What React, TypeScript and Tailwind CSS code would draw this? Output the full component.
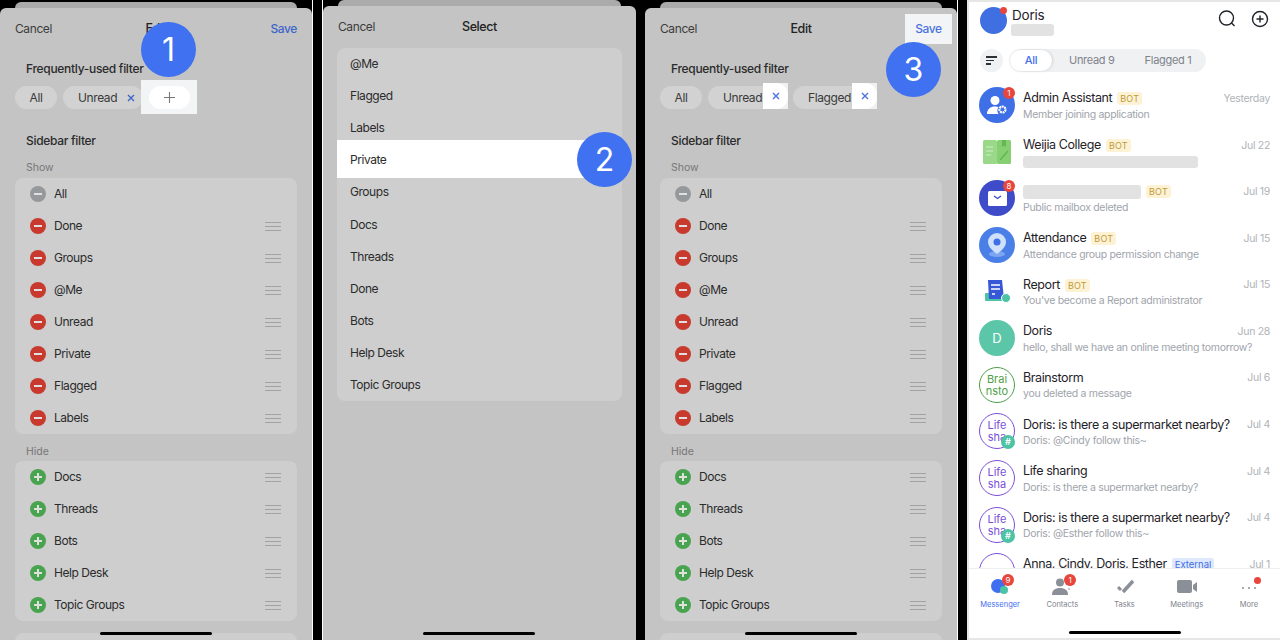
import type { ReactNode } from 'react';

const font = { fontFamily: 'Inter, "Noto Sans", sans-serif' };

const Grip = () => (
  <div className="flex w-4 flex-col gap-[3px]">
    <div className="h-px bg-[#a2a2a2]" />
    <div className="h-px bg-[#a2a2a2]" />
    <div className="h-px bg-[#a2a2a2]" />
  </div>
);

// round minus / plus marker in the sidebar filter lists
const Marker = ({ kind }: { kind: 'lock' | 'minus' | 'plus' }) => {
  const bg = kind === 'plus' ? 'bg-[#49a44f]' : kind === 'minus' ? 'bg-[#c93a2e]' : 'bg-[#96999c]';
  return (
    <div className={`relative flex h-4 w-4 shrink-0 items-center justify-center rounded-full ${bg}`}>
      <div className="h-[1.5px] w-2 bg-[#e0e0e0]" />
      {kind === 'plus' && <div className="absolute h-2 w-[1.5px] bg-[#e0e0e0]" />}
    </div>
  );
};

const FilterRow = ({ label, kind }: { label: string; kind: 'lock' | 'minus' | 'plus' }) => (
  <div className="flex h-8 items-center pl-[15px] pr-[16px]">
    <Marker kind={kind} />
    <span className="ml-[8px] flex-1 text-[12px] tracking-[-0.45px] text-[#2b2b2b]">{label}</span>
    {kind !== 'lock' && <Grip />}
  </div>
);

const NumberBadge = ({ n, className }: { n: number; className: string }) => (
  <div className={`absolute z-20 flex h-[55px] w-[55px] items-center justify-center rounded-full bg-[#3f71f0] text-[32px] text-white ${className}`}>
    {n}
  </div>
);

const Chip = ({ children, className }: { children?: ReactNode; className: string }) => (
  <div className={`flex h-[23px] items-center rounded-full bg-[#d2d2d2] text-[12px] tracking-[-0.4px] text-[#3a3a3a] ${className}`}>{children}</div>
);

const Cross = ({ color }: { color: string }) => (
  <svg width="8" height="8" viewBox="0 0 8 8" fill="none" stroke={color} strokeWidth="1.4">
    <path d="M1 1l6 6M7 1L1 7" />
  </svg>
);

const Plus = () => (
  <svg width="11" height="11" viewBox="0 0 11 11" fill="none" stroke="#77797c" strokeWidth="1.1">
    <path d="M5.5 0v11M0 5.5h11" />
  </svg>
);

const SheetTop = ({ title, save, top }: { title: string; save: boolean; top: string }) => (
  <div className={`flex items-center justify-between px-[15px] text-[12px] leading-[16px] tracking-[-0.4px] ${top}`}>
    <span className="w-[60px] text-[#3c3c3c]">Cancel</span>
    <span className="text-[12.5px] font-medium text-[#222]">{title}</span>
    <span className="w-[60px] text-right font-medium text-[#3d66c9]">{save ? 'Save' : ''}</span>
  </div>
);

const showRows = ['Done', 'Groups', '@Me', 'Unread', 'Private', 'Flagged', 'Labels'];
const hideRows = ['Docs', 'Threads', 'Bots', 'Help Desk', 'Topic Groups'];
const selectRows = ['@Me', 'Flagged', 'Labels', 'Private', 'Groups', 'Docs', 'Threads', 'Done', 'Bots', 'Help Desk', 'Topic Groups'];

const EditSheet = ({ step }: { step: 1 | 3 }) => (
  <div className="relative flex h-[640px] w-[312px] shrink-0 flex-col overflow-hidden bg-black pt-[2px]">
    <div className="mx-[15px] h-[6px] shrink-0 rounded-t-[6px] bg-[#ababab]" />
    <div className="flex-1 rounded-t-[6px] bg-[#c4c4c4]">
      <SheetTop title="Edit" save={step === 1} top="pt-[13px]" />
      <div className="mt-[24px] px-[26px] text-[12px] font-medium leading-[16px] tracking-[-0.3px] text-[#2b2b2b]">Frequently-used filter</div>
      <div className="mt-[9px] flex px-[15px]">
        <Chip className="w-[42px] justify-center">All</Chip>
        {step === 1 ? (
          <>
            <Chip className="ml-[6px] w-[80px] pl-[15px]">
              Unread
              <span className="ml-[10px]">
                <Cross color="#3d66c9" />
              </span>
            </Chip>
            {/* the + itself is drawn in the highlight on top */}
            <Chip className="ml-[5px] w-[41px]" />
          </>
        ) : (
          <>
            <Chip className="ml-[6px] w-[80px] pl-[15px]">Unread</Chip>
            <Chip className="ml-[5px] w-[84px] pl-[15px]">Flagged</Chip>
          </>
        )}
      </div>
      <div className="mt-[24px] px-[26px] text-[12px] font-medium leading-[16px] tracking-[-0.3px] text-[#2b2b2b]">Sidebar filter</div>
      <div className="mt-[12px] px-[26px] text-[10.5px] leading-[14px] text-[#777]">Show</div>
      <div className="mx-[15px] mt-[3px] rounded-[8px] bg-[#cecece]">
        <FilterRow label="All" kind="lock" />
        {showRows.map(r => (
          <FilterRow key={r} label={r} kind="minus" />
        ))}
      </div>
      <div className="mt-[11px] px-[26px] text-[10.5px] leading-[14px] text-[#777]">Hide</div>
      <div className="mx-[15px] mt-[2px] rounded-[8px] bg-[#cecece]">
        {hideRows.map(r => (
          <FilterRow key={r} label={r} kind="plus" />
        ))}
      </div>
      <div className="mx-[15px] mt-[12px] h-[20px] rounded-t-[8px] bg-[#cecece]" />
    </div>
    <div className="absolute bottom-[5px] left-[100px] h-[3px] w-[112px] rounded-full bg-black" />
    {step === 1 ? (
      <>
        <div className="absolute left-[141px] top-[80px] flex h-[34px] w-[56px] items-center justify-center bg-[#f3f4f6]">
          <div className="flex h-[23px] w-[41px] items-center justify-center rounded-full bg-white">
            <Plus />
          </div>
        </div>
        <NumberBadge n={1} className="left-[141px] top-[22px]" />
      </>
    ) : (
      <>
        <div className="absolute left-[118px] top-[83px] h-[26px] w-[25px] bg-[#eef0f2]">
          <div className="flex h-[26px] w-[25px] items-center justify-center rounded-r-[12px] bg-white">
            <Cross color="#4a73e0" />
          </div>
        </div>
        <div className="absolute left-[207px] top-[83px] h-[26px] w-[25px] bg-[#eef0f2]">
          <div className="flex h-[26px] w-[25px] items-center justify-center rounded-r-[12px] bg-white">
            <Cross color="#4a73e0" />
          </div>
        </div>
        <div className="absolute left-[260px] top-[14px] flex h-[30px] w-[47px] items-center justify-center bg-[#f3f4f6] text-[12px] font-medium tracking-[-0.4px] text-[#4a73e0]">Save</div>
        <NumberBadge n={3} className="left-[241px] top-[42px]" />
      </>
    )}
  </div>
);

const SelectSheet = () => (
  <div className="relative flex h-[640px] w-[313px] shrink-0 flex-col overflow-hidden bg-black">
    <div className="mx-[15px] h-[6px] shrink-0 rounded-t-[6px] bg-[#ababab]" />
    <div className="flex-1 rounded-t-[6px] bg-[#c4c4c4]">
      <SheetTop title="Select" save={false} top="pt-[13px]" />
      <div className="mx-[14px] mt-[13px] rounded-[8px] bg-[#cecece]">
        {selectRows.map(r => (
          <div key={r} className="relative flex h-[32.1px] items-center px-[13px] text-[12px] tracking-[-0.45px] text-[#2b2b2b]">
            {r === 'Private' && <div className="absolute inset-x-0 bottom-[-2px] top-[-4px] bg-white" />}
            <span className="relative">{r}</span>
          </div>
        ))}
      </div>
    </div>
    <div className="absolute bottom-[5px] left-[100px] h-[3px] w-[112px] rounded-full bg-black" />
    <NumberBadge n={2} className="left-[254px] top-[132px]" />
  </div>
);

const Count = ({ n, className }: { n: number; className: string }) => (
  <div className={`absolute flex h-[12px] w-[12px] items-center justify-center rounded-full bg-[#e8453c] text-[8px] leading-none text-white ${className}`}>{n}</div>
);

const Bot = () => (
  <span className="ml-[5px] rounded-[3px] bg-[#fdf3d4] px-[3px] text-[9px] leading-[13px] tracking-wide text-[#c09a3e]">BOT</span>
);

const Blob = ({ className }: { className: string }) => <div className={`rounded-[3px] bg-[#e2e2e2] ${className}`} />;

const RingAvatar = ({ a, b, tone, hash }: { a: string; b: string; tone: string; hash?: boolean }) => (
  <div className={`relative flex h-[36px] w-[36px] flex-col items-center justify-center rounded-full border text-[11px] leading-[12px] ${tone}`}>
    <span>{a}</span>
    <span>{b}</span>
    {hash && (
      <div className="absolute bottom-[-1px] right-[-1px] flex h-[14px] w-[14px] items-center justify-center rounded-full bg-[#4cc3a5] text-[9px] font-semibold text-white">#</div>
    )}
  </div>
);

const purple = 'border-[#7a4fd8] text-[#7a4fd8]';

type Chat = { avatar: ReactNode; name: ReactNode; date: string; sub: ReactNode };

const chats: Chat[] = [
  {
    avatar: (
      <div className="relative flex h-[36px] w-[36px] items-center justify-center rounded-full bg-[#3f6fe6]">
        <svg width="22" height="20" viewBox="0 0 22 20" fill="white">
          <circle cx="9" cy="5.5" r="4.5" />
          <path d="M1 19c0-5 3.5-7.5 8-7.5 1.5 0 2.5.3 3.5.7-1.5 2-1.5 4.5 0 6.8z" />
          <circle cx="16.5" cy="14.5" r="3" fill="none" stroke="white" strokeWidth="2.2" strokeDasharray="2 .6" />
        </svg>
        <Count n={1} className="right-0 top-0" />
      </div>
    ),
    name: <>Admin Assistant<Bot /></>,
    date: 'Yesterday',
    sub: 'Member joining application',
  },
  {
    avatar: (
      <svg width="36" height="36" viewBox="0 0 36 36">
        <rect x="4" y="6" width="14" height="24" rx="1.5" fill="#9ad98a" />
        <rect x="18" y="6" width="14" height="24" rx="1.5" fill="#86cf72" />
        <path d="M7 13h7M7 17h7M7 21h5" stroke="#cfeec4" strokeWidth="1" />
        <path d="M23 6h4v7l-2-1.5-2 1.5z" fill="#63b850" />
        <path d="M21 26l8-9" stroke="#63b850" strokeWidth="1.5" />
      </svg>
    ),
    name: <>Weijia College<Bot /></>,
    date: 'Jul 22',
    sub: <Blob className="mt-[3px] h-[12px] w-[175px]" />,
  },
  {
    avatar: (
      <div className="relative flex h-[36px] w-[36px] items-center justify-center rounded-full bg-[#3e4cc9]">
        <svg width="19" height="15" viewBox="0 0 19 15">
          <rect width="19" height="15" rx="1.5" fill="white" />
          <path d="M6 5l3.5 2.5L13 5" stroke="#3e4cc9" strokeWidth="1.4" fill="none" />
        </svg>
        <Count n={8} className="right-0 top-0" />
      </div>
    ),
    name: <><Blob className="h-[14px] w-[118px]" /><Bot /></>,
    date: 'Jul 19',
    sub: 'Public mailbox deleted',
  },
  {
    avatar: (
      <div className="flex h-[36px] w-[36px] items-center justify-center rounded-full bg-[#4a7fe8]">
        <svg width="22" height="26" viewBox="0 0 22 26">
          <ellipse cx="11" cy="22" rx="8" ry="3" fill="#7ea6f0" />
          <path d="M11 1a9 9 0 0 1 9 9c0 5-5 9-9 12-4-3-9-7-9-12a9 9 0 0 1 9-9z" fill="#cfe0fb" />
          <circle cx="11" cy="10" r="3.5" fill="#3f6fe6" />
        </svg>
      </div>
    ),
    name: <>Attendance<Bot /></>,
    date: 'Jul 15',
    sub: 'Attendance group permission change',
  },
  {
    avatar: (
      <svg width="36" height="36" viewBox="0 0 36 36">
        <rect x="6" y="19" width="18" height="8" rx="1" fill="#4cc3a5" />
        <path d="M9 6h14l2 19H10z" fill="#3557d8" />
        <path d="M12 11h9M12 15h9M13 20h3" stroke="white" strokeWidth="1.5" />
        <circle cx="27" cy="24" r="4.5" fill="#4cc3a5" stroke="white" />
      </svg>
    ),
    name: <>Report<Bot /></>,
    date: 'Jul 15',
    sub: "You've become a Report administrator",
  },
  {
    avatar: <div className="flex h-[36px] w-[36px] items-center justify-center rounded-full bg-[#5cc6a8] text-[13px] text-white">D</div>,
    name: 'Doris',
    date: 'Jun 28',
    sub: 'hello, shall we have an online meeting tomorrow?',
  },
  {
    avatar: <RingAvatar a="Brai" b="nsto" tone="border-[#4f9e48] text-[#4f9e48]" />,
    name: 'Brainstorm',
    date: 'Jul 6',
    sub: 'you deleted a message',
  },
  {
    avatar: <RingAvatar a="Life" b="sha" tone={purple} hash />,
    name: 'Doris: is there a supermarket nearby?',
    date: 'Jul 4',
    sub: 'Doris: @Cindy follow this~',
  },
  {
    avatar: <RingAvatar a="Life" b="sha" tone={purple} />,
    name: 'Life sharing',
    date: 'Jul 4',
    sub: 'Doris: is there a supermarket nearby?',
  },
  {
    avatar: <RingAvatar a="Life" b="sha" tone={purple} hash />,
    name: 'Doris: is there a supermarket nearby?',
    date: 'Jul 4',
    sub: 'Doris: @Esther follow this~',
  },
  {
    avatar: <RingAvatar a="" b="" tone={purple} />,
    name: (
      <>
        Anna, Cindy, Doris, Esther
        <span className="ml-[5px] rounded-[3px] bg-[#dfe9fd] px-[3px] text-[9.5px] leading-[13px] tracking-normal text-[#3f6fe6]">External</span>
      </>
    ),
    date: 'Jul 1',
    sub: '',
  },
];

const TabIcon = ({ name }: { name: string }) => {
  if (name === 'Messenger')
    return (
      <svg width="24" height="20" viewBox="0 0 24 20">
        <circle cx="10" cy="9" r="7" fill="#3f6ff0" />
        <circle cx="16" cy="13" r="4" fill="#4cc3a5" />
      </svg>
    );
  if (name === 'Contacts')
    return (
      <svg width="24" height="20" viewBox="0 0 24 20" fill="#8a8f98">
        <circle cx="10" cy="5.5" r="4" />
        <path d="M2 18c0-5 3-7 8-7s8 2 8 7z" />
        <path d="M18 8h4M18 12h2" stroke="#8a8f98" strokeWidth="1" />
      </svg>
    );
  if (name === 'Tasks')
    return (
      <svg width="24" height="20" viewBox="0 0 24 20" fill="none" stroke="#8a8f98">
        <path d="M5 10l3 3" strokeWidth="3" />
        <path d="M10 15L20 4" strokeWidth="3.5" />
      </svg>
    );
  if (name === 'Meetings')
    return (
      <svg width="24" height="20" viewBox="0 0 24 20" fill="#8a8f98">
        <rect x="2" y="3" width="15" height="13" rx="2" />
        <path d="M18 8l4-3v10l-4-3z" />
      </svg>
    );
  return (
    <svg width="24" height="20" viewBox="0 0 24 20" fill="#8a8f98">
      <circle cx="6" cy="11" r="1" />
      <circle cx="12" cy="11" r="1" />
      <circle cx="18" cy="11" r="1" />
    </svg>
  );
};

const tabs = [
  { name: 'Messenger', count: 9 },
  { name: 'Contacts', count: 1 },
  { name: 'Tasks' },
  { name: 'Meetings' },
  { name: 'More', dot: true },
];

const Messenger = () => (
  <div className="flex h-[640px] w-[313px] shrink-0 flex-col overflow-hidden border-y-2 border-l-2 border-[#e6e6e6] bg-white">
    <div className="flex h-[47px] shrink-0 items-start pl-[11px] pr-[11px] pt-[5px]">
      <div className="relative h-[27px] w-[27px] rounded-full bg-[#3f6fe0]">
        <div className="absolute right-0 top-0 h-[7px] w-[7px] rounded-full bg-[#e8453c]" />
      </div>
      <div className="ml-[4px] flex-1">
        <div className="ml-[1px] text-[13.5px] leading-[16px] tracking-[-0.2px] text-[#1f2329]">Doris</div>
        <Blob className="mt-[1px] h-[12px] w-[43px]" />
      </div>
      <svg className="mt-[3px]" width="18" height="18" viewBox="0 0 18 18" fill="none" stroke="#1f2329" strokeWidth="1.4">
        <circle cx="8.5" cy="8" r="7" />
        <path d="M13.5 13l3 3" />
      </svg>
      <svg className="ml-[15px] mt-[3px]" width="18" height="18" viewBox="0 0 18 18" fill="none" stroke="#1f2329" strokeWidth="1.4">
        <circle cx="9" cy="9" r="7.5" />
        <path d="M9 5.5v7M5.5 9h7" />
      </svg>
    </div>
    <div className="flex h-[23px] shrink-0 items-center pl-[11px]">
      <div className="flex h-[23px] w-[23px] items-center justify-center rounded-full bg-[#f0f1f3]">
        <div className="flex w-[11px] flex-col gap-[2px]">
          <div className="h-[1.5px] w-[11px] bg-[#2b2f36]" />
          <div className="h-[1.5px] w-[8px] bg-[#2b2f36]" />
          <div className="h-[1.5px] w-[5px] bg-[#2b2f36]" />
        </div>
      </div>
      <div className="ml-[6px] flex h-[23px] w-[197px] items-center rounded-full bg-[#f0f1f3] pl-[1px] text-[11px] tracking-[-0.3px] text-[#7e838c]">
        <div className="flex h-[21px] w-[42px] items-center justify-center rounded-full bg-white font-medium text-[#3f6ff0] shadow-[1px_0_3px_rgba(0,0,0,0.12)]">All</div>
        <span className="ml-[17px]">Unread 9</span>
        <span className="ml-[30px]">Flagged 1</span>
      </div>
    </div>
    <div className="min-h-0 flex-1 overflow-hidden pl-[10px] pr-[10px] pt-[11px]">
      {chats.map((c, i) => (
        <div key={i} className="flex h-[46.6px] items-center">
          <div className="mb-[2px] flex h-[36px] w-[36px] shrink-0 items-center justify-center">{c.avatar}</div>
          <div className="ml-[8px] min-w-0 flex-1">
            <div className="flex items-center justify-between">
              <div className="flex h-[16px] items-center whitespace-nowrap text-[12.5px] tracking-[-0.4px] text-[#1f2329]">{c.name}</div>
              <span className="ml-1 shrink-0 text-[10.5px] tracking-[-0.3px] text-[#b0b3b8]">{c.date}</span>
            </div>
            <div className="flex h-[15px] items-center whitespace-nowrap text-[10.5px] leading-[15px] tracking-[-0.3px] text-[#a0a4ab]">{c.sub}</div>
          </div>
        </div>
      ))}
    </div>
    <div className="flex h-[70px] shrink-0 flex-col border-t border-[#eeeeee] bg-white">
      <div className="flex">
        {tabs.map(t => (
          <div key={t.name} className="relative flex flex-1 flex-col items-center pt-[8px]">
            <TabIcon name={t.name} />
            <span className={`mt-[2px] text-[7.5px] leading-[12px] ${t.name === 'Messenger' ? 'text-[#3f6ff0]' : 'text-[#7e838c]'}`}>{t.name}</span>
            {t.count && <Count n={t.count} className="left-[33px] top-[5px]" />}
            {t.dot && <div className="absolute left-[36px] top-[8px] h-[7px] w-[7px] rounded-full bg-[#e8453c]" />}
          </div>
        ))}
      </div>
      <div className="mx-auto mt-[20px] h-[3px] w-[112px] rounded-full bg-black" />
    </div>
  </div>
);

export default function App() {
  return (
    <div className="flex h-[640px] w-[1280px] overflow-hidden bg-black" style={font}>
      <EditSheet step={1} />
      <div className="w-px bg-white" />
      <div className="w-[9px] bg-black" />
      <div className="w-px bg-white" />
      <SelectSheet />
      <div className="w-[9px] bg-black" />
      <EditSheet step={3} />
      <div className="w-px bg-white" />
      <div className="w-[9px] bg-black" />
      <Messenger />
    </div>
  );
}
